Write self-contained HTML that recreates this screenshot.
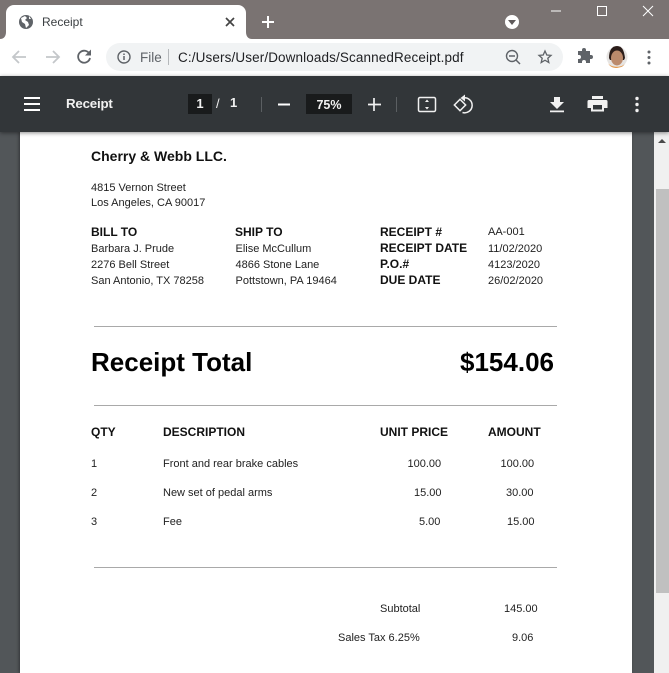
<!DOCTYPE html>
<html><head><meta charset="utf-8"><style>
html,body{margin:0;padding:0;width:669px;height:673px;overflow:hidden;background:#525659;font-family:"Liberation Sans",sans-serif}
.a{position:absolute;white-space:nowrap}
.t{position:absolute;white-space:nowrap;font-size:11px;line-height:14px;color:#222}
.b{position:absolute;white-space:nowrap;font-size:12px;line-height:14px;font-weight:bold;color:#111}
.r{position:absolute;height:1px;background:#a9a9a9;left:94px;width:463px}
svg{position:absolute;overflow:visible}
</style></head><body>
<div class="a" style="left:0;top:0;width:669px;height:39px;background:#7a7372"></div>
<div class="a" style="left:6px;top:5px;width:240px;height:34px;background:#fff;border-radius:8px 8px 0 0"></div>
<svg style="left:0;top:0" width="669" height="76">
<path d="M0 39C4 39 6 36 6 32V39ZM246 32C246 36 248 39 252 39H246Z" fill="#fff"/>
<circle cx="26" cy="22" r="7" fill="#5f6368"/>
<path d="M21 18l4-2 2 2-2 2 3 2 1 3-3 3-1-4-3-2zM29 16l2 3-2 0z" fill="#fff"/>
<path d="M226 18l8 8M234 18l-8 8" stroke="#444" stroke-width="1.7"/>
<path d="M268 16v12M262 22h12" stroke="#fff" stroke-width="2"/>
<circle cx="512" cy="22" r="7" fill="#fff"/><path d="M508 20h8l-4 5z" fill="#5f5a5a"/>
<path d="M551 11h10" stroke="#fff" stroke-width="1"/>
<rect x="597.500" y="6.500" width="9" height="9" fill="none" stroke="#fff"/>
<path d="M643 6l10 10M653 6l-10 10" stroke="#fff" stroke-width="1"/>
</svg>
<div class="a" style="left:42px;top:15px;font-size:12px;line-height:14px;color:#3c4043">Receipt</div>
<div class="a" style="left:0;top:39px;width:669px;height:37px;background:#fff"></div>
<div class="a" style="left:106px;top:43px;width:457px;height:28px;background:#f1f3f4;border-radius:14px"></div>
<svg style="left:0;top:0" width="669" height="76">
<path d="M26 57H14M19 51l-6 6 6 6" fill="none" stroke="#c4c7ca" stroke-width="1.8"/>
<path d="M46 57h12M53 51l6 6-6 6" fill="none" stroke="#c4c7ca" stroke-width="1.8"/>
<path d="M89.500 54a6 6 0 1 0 .5 4" fill="none" stroke="#5f6368" stroke-width="1.8"/><path d="M91 49.500v6h-6z" fill="#5f6368"/>
<circle cx="124" cy="57" r="6" fill="none" stroke="#5f6368" stroke-width="1.4"/><path d="M124 56v4M124 53.500v1.500" stroke="#5f6368" stroke-width="1.5"/>
<path d="M168.500 49v16" stroke="#b5b8bb"/>
<circle cx="512" cy="56" r="5.500" fill="none" stroke="#5f6368" stroke-width="1.4"/><path d="M509 56h6M516 60l4 4" stroke="#5f6368" stroke-width="1.5"/>
<path d="M545 51l1.800 4 4.200.4-3.200 2.800 1 4.300-3.800-2.300-3.800 2.300 1-4.300-3.200-2.800 4.200-.4z" fill="none" stroke="#5f6368" stroke-width="1.3"/>
<path d="M578 54h4v-1a2 2 0 0 1 4 0v1h4v4h1a2 2 0 0 1 0 4h-1v4h-4v-1a2 2 0 0 0-4 0v1h-4v-4h1a2 2 0 0 0 0-4h-1z" transform="translate(0,-3)" fill="#5f6368"/>
<circle cx="617" cy="57" r="10.500" fill="#e6e4e2"/>
<path d="M609 58c0-8 3-12 8-12s7 4 8 12l-1 2h-14z" fill="#2b1d1a"/>
<ellipse cx="617" cy="58" rx="6" ry="7.500" fill="#bb8a6c"/><path d="M608 63c3 5 15 5 17 0-2 5-5 4-8 5-4 0-7-1-9-5z" fill="#e39a50"/>
<circle cx="649" cy="52" r="1.500" fill="#5f6368"/><circle cx="649" cy="57.500" r="1.500" fill="#5f6368"/><circle cx="649" cy="63" r="1.500" fill="#5f6368"/>
</svg>
<div class="a" style="left:140px;top:50px;font-size:13.500px;line-height:16px;color:#5f6368">File</div>
<div class="a" style="left:178px;top:50px;font-size:13.500px;line-height:16px;color:#202124;letter-spacing:.12px">C:/Users/User/Downloads/ScannedReceipt.pdf</div>

<div class="a" style="left:654px;top:132px;width:15px;height:541px;background:#f0f0f0"></div>
<div class="a" style="left:656px;top:189px;width:13px;height:404px;background:#c0c0c0"></div>
<svg style="left:0;top:0" width="669" height="150"><path d="M658 143l4-4 4 4z" fill="#4a4a4a"/></svg>
<div class="a" style="left:20px;top:132px;width:612px;height:541px;background:#fff;box-shadow:-1px 0 3px rgba(0,0,0,.4)"></div>
<div class="a" style="left:0;top:76px;width:669px;height:56px;background:#323639;box-shadow:0 1px 4px rgba(0,0,0,.45)"></div>

<svg style="left:0;top:0;z-index:2" width="669" height="132">
<path d="M24 98h16M24 104h16M24 110h16" stroke="#fff" stroke-width="2"/>
<path d="M261.500 97v15M396.500 97v15" stroke="#5b5f62"/>
<path d="M278 104.500h12" stroke="#fff" stroke-width="2"/>
<path d="M374 98v13M368 104.500h13" stroke="#f1f1f1" stroke-width="1.700"/>
<rect x="418.500" y="97.500" width="17" height="14" rx="1.500" fill="none" stroke="#f1f1f1" stroke-width="1.500"/>
<path d="M425 102l2-2.500 2 2.500zM425 107l2 2.500 2-2.500z" fill="#f1f1f1"/>
<rect x="456" y="101" width="8" height="8" transform="rotate(45 460 105)" fill="none" stroke="#f1f1f1" stroke-width="1.500"/>
<path d="M463 98a7.500 7.500 0 1 1 -.5 14.500" fill="none" stroke="#f1f1f1" stroke-width="1.500"/><path d="M465 94.500l-4.500 3.500 4.500 3.500z" fill="#f1f1f1"/>
<path d="M554 97h6v5h4l-7 7-7-7h4zM550 110.500h14v1.800h-14z" fill="#f1f1f1"/>
<path d="M592 96h11v3h-11zM589 100h17a1.500 1.500 0 0 1 1.500 1.500V108h-3.500v3.500h-13V108h-3.500v-6.500a1.500 1.500 0 0 1 1.500-1.500zM593 105v4.500h9V105z" fill="#f1f1f1"/>
<circle cx="637" cy="98.500" r="1.700" fill="#f1f1f1"/><circle cx="637" cy="104.500" r="1.700" fill="#f1f1f1"/><circle cx="637" cy="110.500" r="1.700" fill="#f1f1f1"/>
</svg>
<div class="a" style="z-index:2;left:66px;top:96px;font-size:13.300px;line-height:16px;font-weight:bold;color:#f1f1f1;letter-spacing:-.2px">Receipt</div>
<div class="a" style="z-index:2;left:188px;top:94px;width:24px;height:20px;background:#191b1c"></div>
<div class="a" style="z-index:2;left:188px;top:96px;width:24px;text-align:center;font-size:13px;line-height:16px;font-weight:bold;color:#f1f1f1">1</div>
<div class="a" style="z-index:2;left:216px;top:96px;font-size:13px;line-height:16px;color:#f1f1f1">/</div>
<div class="a" style="z-index:2;left:230px;top:95px;font-size:13px;line-height:16px;font-weight:bold;color:#f1f1f1">1</div>
<div class="a" style="z-index:2;left:306px;top:94px;width:46px;height:20px;background:#191b1c"></div>
<div class="a" style="z-index:2;left:306px;top:97px;width:46px;text-align:center;font-size:12.500px;line-height:16px;font-weight:bold;color:#f1f1f1">75%</div>

<div class="a" style="left:91px;top:148px;font-size:14px;line-height:16px;font-weight:bold;color:#111">Cherry &amp; Webb LLC.</div>
<div class="t" style="left:91px;top:181px">4815 Vernon Street</div>
<div class="t" style="left:91px;top:196px">Los Angeles, CA 90017</div>
<div class="b" style="left:91px;top:225px">BILL TO</div>
<div class="t" style="left:91px;top:242px">Barbara J. Prude</div>
<div class="t" style="left:91px;top:258px">2276 Bell Street</div>
<div class="t" style="left:91px;top:274px">San Antonio, TX 78258</div>
<div class="b" style="left:235px;top:225px">SHIP TO</div>
<div class="t" style="left:235.500px;top:242px">Elise McCullum</div>
<div class="t" style="left:235.500px;top:258px">4866 Stone Lane</div>
<div class="t" style="left:235.500px;top:274px">Pottstown, PA 19464</div>
<div class="b" style="left:380px;top:225px">RECEIPT #</div>
<div class="b" style="left:380px;top:241px">RECEIPT DATE</div>
<div class="b" style="left:380px;top:257px">P.O.#</div>
<div class="b" style="left:380px;top:273px">DUE DATE</div>
<div class="t" style="left:488px;top:225px">AA-001</div>
<div class="t" style="left:488px;top:242px">11/02/2020</div>
<div class="t" style="left:488px;top:258px">4123/2020</div>
<div class="t" style="left:488px;top:274px">26/02/2020</div>
<div class="r" style="top:326px"></div>
<div class="a" style="left:91px;top:347px;font-size:26px;line-height:30px;font-weight:bold;color:#000">Receipt Total</div>
<div class="a" style="left:460px;top:347px;font-size:26px;line-height:30px;font-weight:bold;color:#000">$154.06</div>
<div class="r" style="top:405px"></div>
<div class="b" style="left:91px;top:425px">QTY</div>
<div class="b" style="left:163px;top:425px">DESCRIPTION</div>
<div class="b" style="left:380px;top:425px">UNIT PRICE</div>
<div class="b" style="left:488px;top:425px">AMOUNT</div>
<div class="t" style="left:91px;top:457px">1</div>
<div class="t" style="left:163px;top:457px">Front and rear brake cables</div>
<div class="t" style="left:407.500px;top:457px">100.00</div>
<div class="t" style="left:500.500px;top:457px">100.00</div>
<div class="t" style="left:91px;top:486px">2</div>
<div class="t" style="left:163px;top:486px">New set of pedal arms</div>
<div class="t" style="left:414px;top:486px">15.00</div>
<div class="t" style="left:506px;top:486px">30.00</div>
<div class="t" style="left:91px;top:515px">3</div>
<div class="t" style="left:163px;top:515px">Fee</div>
<div class="t" style="left:419px;top:515px">5.00</div>
<div class="t" style="left:507px;top:515px">15.00</div>
<div class="r" style="top:567px"></div>
<div class="t" style="left:380px;top:602px">Subtotal</div>
<div class="t" style="left:504px;top:602px">145.00</div>
<div class="t" style="left:338px;top:631px">Sales Tax 6.25%</div>
<div class="t" style="left:512px;top:631px">9.06</div>
</body></html>
